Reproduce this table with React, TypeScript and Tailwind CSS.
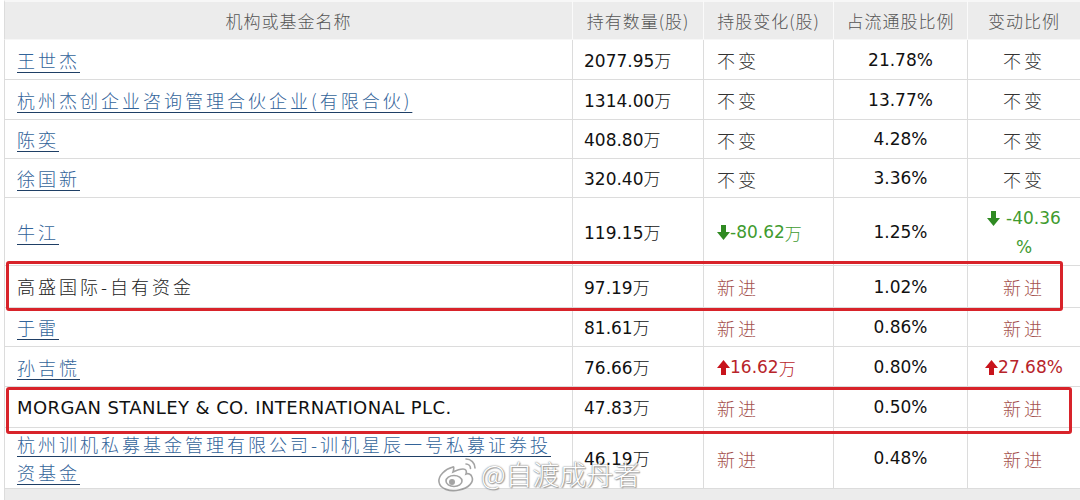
import React from "react";

type Change =
  | { kind: "same" }
  | { kind: "new" }
  | { kind: "down"; text: string }
  | { kind: "up"; text: string };

interface Holder {
  name: React.ReactNode;
  link: boolean;
  amount: string;
  change: Change;
  ratio: string;
  delta: Change;
  height: string;
}

const cn = "font-['Noto_Sans_CJK_SC',sans-serif] font-light";
const num = "font-['DejaVu_Sans','Noto_Sans_CJK_SC',sans-serif]";

const holders: Holder[] = [
  { name: "王世杰", link: true, amount: "2077.95", change: { kind: "same" }, ratio: "21.78%", delta: { kind: "same" }, height: "h-[40px]" },
  { name: "杭州杰创企业咨询管理合伙企业(有限合伙)", link: true, amount: "1314.00", change: { kind: "same" }, ratio: "13.77%", delta: { kind: "same" }, height: "h-[40px]" },
  { name: "陈奕", link: true, amount: "408.80", change: { kind: "same" }, ratio: "4.28%", delta: { kind: "same" }, height: "h-[39px]" },
  { name: "徐国新", link: true, amount: "320.40", change: { kind: "same" }, ratio: "3.36%", delta: { kind: "same" }, height: "h-[39px]" },
  { name: "牛江", link: true, amount: "119.15", change: { kind: "down", text: "-80.62" }, ratio: "1.25%", delta: { kind: "down", text: "-40.36%" }, height: "h-[68px]" },
  { name: "高盛国际-自有资金", link: false, amount: "97.19", change: { kind: "new" }, ratio: "1.02%", delta: { kind: "new" }, height: "h-[42px]" },
  { name: "于雷", link: true, amount: "81.61", change: { kind: "new" }, ratio: "0.86%", delta: { kind: "new" }, height: "h-[39px]" },
  { name: "孙吉慌", link: true, amount: "76.66", change: { kind: "up", text: "16.62" }, ratio: "0.80%", delta: { kind: "up", text: "27.68%" }, height: "h-[40px]" },
  { name: "MORGAN STANLEY & CO. INTERNATIONAL PLC.", link: false, amount: "47.83", change: { kind: "new" }, ratio: "0.50%", delta: { kind: "new" }, height: "h-[41px]" },
  {
    name: (
      <>
        <span className="block whitespace-nowrap">杭州训机私募基金管理有限公司-训机星辰一号私募证券投</span>
        <span className="block">资基金</span>
      </>
    ),
    link: true,
    amount: "46.19",
    change: { kind: "new" },
    ratio: "0.48%",
    delta: { kind: "new" },
    height: "h-[61px]",
  },
];

const ArrowDown = () => (
  <svg width="13" height="15" viewBox="0 0 13 15" className="inline-block shrink-0">
    <path d="M4 0h5v7h4l-6.5 8L0 7h4z" fill="#2f8a22" />
  </svg>
);

const ArrowUp = () => (
  <svg width="13" height="15" viewBox="0 0 13 15" className="inline-block shrink-0">
    <path d="M4 15h5V8h4L6.5 0 0 8h4z" fill="#c8141c" />
  </svg>
);

const ChangeCell = ({ change, unit }: { change: Change; unit: boolean }) => {
  if (change.kind === "same") {
    return <span className={`${cn} text-[18px] tracking-[3px] text-[#333]`}>不变</span>;
  }
  if (change.kind === "new") {
    return <span className={`${cn} text-[18px] tracking-[3px] text-[#a4514d]`}>新进</span>;
  }
  if (change.kind === "down") {
    if (!unit) {
      return (
        <span className={`${num} text-[17px] leading-[29px] text-[#3f9b2f]`}>
          <span className="flex items-center justify-center gap-[6px]">
            <ArrowDown />
            {change.text.replace("%", "")}
          </span>
          <span className="block text-center">%</span>
        </span>
      );
    }
    return (
      <span className={`${num} flex items-center text-[17px] text-[#3f9b2f]`}>
        <ArrowDown />
        {change.text}
        <span className={`${cn} text-[17px]`}>万</span>
      </span>
    );
  }
  return (
    <span className={`${num} flex items-center text-[17px] text-[#b8242a]`}>
      <ArrowUp />
      {change.text}
      {unit && <span className={`${cn} text-[17px]`}>万</span>}
    </span>
  );
};

const WeiboLogo = () => (
  <svg width="44" height="38" viewBox="0 0 44 38">
    <g fill="none" stroke="#8a8a8a" strokeWidth="1.6" opacity="0.85">
      <path d="M17 12c-8 2-15 9-14 15 1 7 11 10 20 8 10-2 15-8 13-13-1-3-4-4-6-3 1-3 0-5-3-5-3 0-6 1-10 3 1-3 1-6 0-5z" fill="#ffffff" />
      <ellipse cx="18" cy="26" rx="8" ry="5.5" fill="#ffffff" />
      <circle cx="16" cy="27" r="2.2" fill="#8a8a8a" />
      <path d="M30 4c5 0 9 4 9 9" strokeLinecap="round" />
      <path d="M30 9c2.5 0 4.5 2 4.5 4.5" strokeLinecap="round" />
    </g>
  </svg>
);

export default function App() {
  const cell = "border-l border-b border-[#dcdcdc] flex items-center";
  const head = `h-[40px] bg-[#ececec] border-t-2 border-t-[#f7f7f7] border-b border-b-[#f7f7f7] border-l border-[#fafafa] flex items-center justify-center ${cn} text-[17px] tracking-[1px] text-[#555]`;

  return (
    <div className="relative w-[1080px] h-[500px] overflow-hidden bg-white">
      <div className="ml-[4px] grid grid-cols-[568px_131px_130px_134px_113px]">
        <div className={`${head} border-l-[#dcdcdc]`}>机构或基金名称</div>
        <div className={head}>持有数量(股)</div>
        <div className={head}>持股变化(股)</div>
        <div className={head}>占流通股比例</div>
        <div className={head}>变动比例</div>

        {holders.map((h, i) => (
          <React.Fragment key={`holder_${i}`}>
            <div className={`${cell} ${h.height} pl-[12px]`}>
              {h.link ? (
                <span className={`${cn} text-[18px] tracking-[3px] leading-[28px] text-[#33649a] underline underline-offset-[4px] decoration-[#1f3f66]`}>
                  {h.name}
                </span>
              ) : typeof h.name === "string" && /^[A-Z]/.test(h.name) ? (
                <span className="font-['DejaVu_Sans',sans-serif] text-[18px] tracking-[0.4px] text-[#111]">{h.name}</span>
              ) : (
                <span className={`${cn} text-[18px] tracking-[3px] text-[#222]`}>{h.name}</span>
              )}
            </div>
            <div className={`${cell} ${h.height} pl-[11px] pt-[2px]`}>
              <span className={`${num} text-[17px] text-[#111]`}>
                {h.amount}
                <span className={`${cn} text-[17px]`}>万</span>
              </span>
            </div>
            <div className={`${cell} ${h.height} pl-[13px] pt-[2px]`}>
              <ChangeCell change={h.change} unit />
            </div>
            <div className={`${cell} ${h.height} justify-center pt-[2px]`}>
              <span className={`${num} text-[17px] text-[#111]`}>{h.ratio}</span>
            </div>
            <div className={`${cell} ${h.height} justify-center pt-[2px]`}>
              <ChangeCell change={h.delta} unit={false} />
            </div>
          </React.Fragment>
        ))}
      </div>
      <div className="ml-[4px] h-[11px] bg-[#ececec] border-l border-[#dcdcdc]" />

      {/* annotation boxes */}
      <div className="absolute left-[6px] top-[261px] w-[1057px] h-[50px] border-[3px] border-[#d8232a] rounded-[3px]" />
      <div className="absolute left-[6px] top-[387px] w-[1066px] h-[47px] border-[3px] border-[#d8232a] rounded-[3px]" />

      {/* watermark */}
      <div className="absolute left-[436px] top-[455px] flex items-center gap-[1px] opacity-90">
        <WeiboLogo />
        <span className={`${cn} text-[27px] leading-[34px] text-white [text-shadow:0_0_1px_#777,0_0_2px_#888,1px_1px_1px_#999]`}>
          @自渡成舟者
        </span>
      </div>
    </div>
  );
}
